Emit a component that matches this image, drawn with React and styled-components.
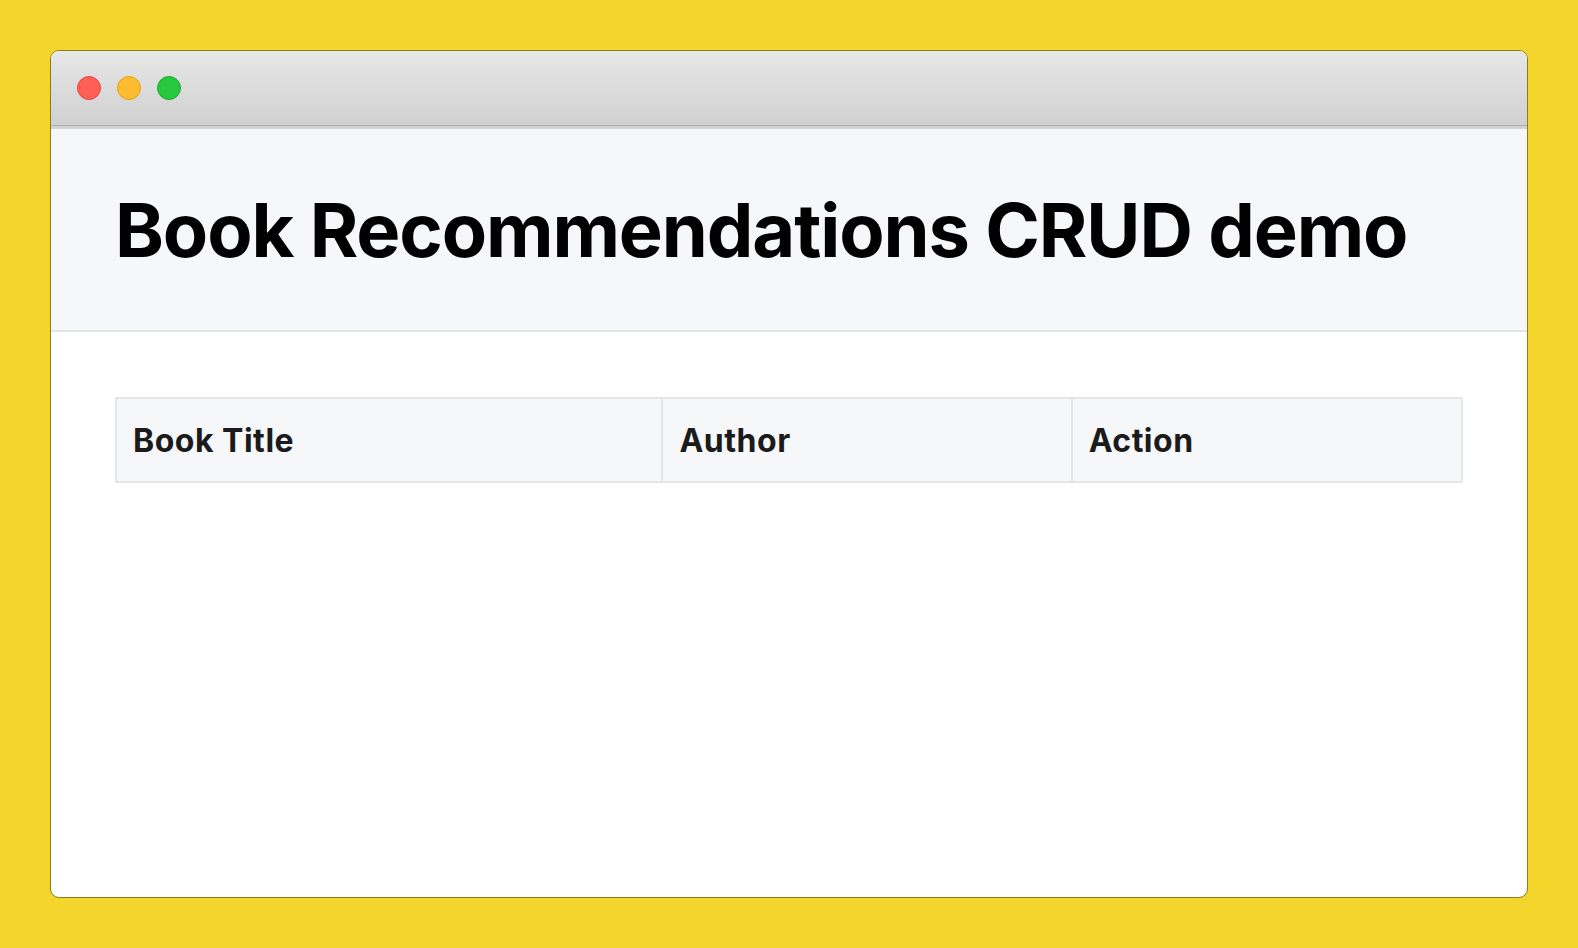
import React from "react";
import styled, { createGlobalStyle } from "styled-components";

const GlobalStyle = createGlobalStyle`
  * { box-sizing: border-box; }
  html, body { margin: 0; padding: 0; }
  body {
    background: #f4d52b;
    font-family: Inter, "Noto Sans", "Liberation Sans", sans-serif;
  }
`;

const Page = styled.div`
  height: 948px;
  padding: 50px;
  display: flex;
`;

const Window = styled.div`
  flex: 1;
  display: flex;
  flex-direction: column;
  background: #ffffff;
  border: 1px solid #8d7c1c;
  border-radius: 9px;
  overflow: hidden;
`;

const TitleBar = styled.div`
  height: 75px;
  flex: none;
  display: flex;
  align-items: center;
  gap: 16px;
  padding-left: 26px;
  background: linear-gradient(#e7e7e7, #d1d1d1);
  border-bottom: 1px solid #adadad;
`;

const TitleRule = styled.div`
  height: 3px;
  flex: none;
  background: #d3d3d3;
`;

const Dot = styled.span`
  width: 24px;
  height: 24px;
  border-radius: 50%;
  background: ${(p) => p.$fill};
  border: 1px solid ${(p) => p.$edge};
`;

const Header = styled.header`
  flex: none;
  height: 203px;
  display: flex;
  align-items: center;
  padding: 0 64px;
  background: #f6f7f9;
  border-bottom: 2px solid #e3e5e8;
`;

const Heading = styled.h1`
  margin: 0;
  font-family: Inter, "Liberation Sans", sans-serif;
  font-weight: 700;
  font-size: 74px;
  line-height: 88px;
  color: #000000;
  letter-spacing: -1.1px;
`;

const Main = styled.main`
  padding: 65px 64px;
`;

const Table = styled.table`
  width: 100%;
  border-collapse: collapse;
  table-layout: fixed;
`;

const HeadCell = styled.th`
  width: ${(p) => p.$w};
  text-align: left;
  padding: 0 16px;
  height: 84px;
  background: #f6f7f9;
  border: 2px solid #e3e5e8;
  font-family: Inter, "Liberation Sans", sans-serif;
  font-weight: 700;
  font-size: 32px;
  letter-spacing: 0.5px;
  color: #1b1b1b;
`;

export default function App() {
  return (
    <>
      <GlobalStyle />
      <Page>
        <Window>
          <TitleBar>
            <Dot $fill="#ff5f57" $edge="#e2463f" />
            <Dot $fill="#febc2e" $edge="#e1a116" />
            <Dot $fill="#28c840" $edge="#1aab29" />
          </TitleBar>
          <TitleRule />
          <Header>
            <Heading>Book Recommendations CRUD demo</Heading>
          </Header>
          <Main>
            <Table>
              <thead>
                <tr>
                  <HeadCell $w="40.6%">Book Title</HeadCell>
                  <HeadCell $w="30.4%">Author</HeadCell>
                  <HeadCell $w="29%">Action</HeadCell>
                </tr>
              </thead>
              <tbody />
            </Table>
          </Main>
        </Window>
      </Page>
    </>
  );
}
